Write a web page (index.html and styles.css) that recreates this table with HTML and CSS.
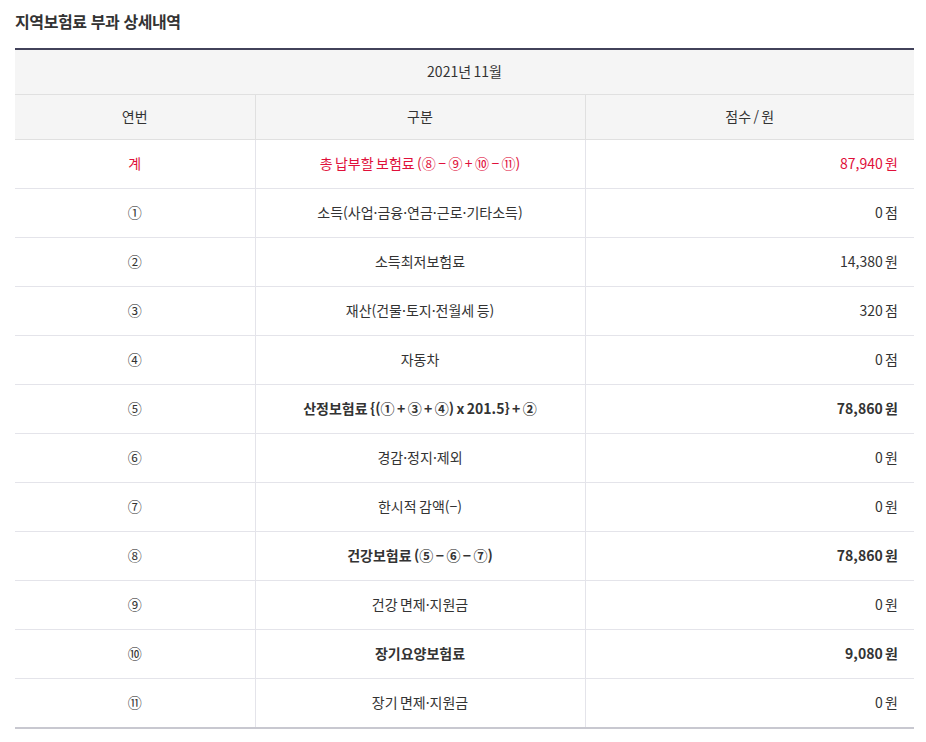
FILE: index.html
```html
<!DOCTYPE html>
<html lang="ko">
<head>
<meta charset="utf-8">
<link rel="stylesheet" href="styles.css">
</head>
<body>
<div class="wrap">
  <h2 class="title">지역보험료 부과 상세내역</h2>
  <table class="detail">
    <colgroup>
      <col class="c1"><col class="c2"><col class="c3">
    </colgroup>
    <thead>
      <tr class="month"><th colspan="3">2021년 11월</th></tr>
      <tr class="heads"><th>연번</th><th>구분</th><th>점수 / 원</th></tr>
    </thead>
    <tbody>
      <tr class="red"><td>계</td><td>총 납부할 보험료 (⑧ − ⑨ + ⑩ − ⑪)</td><td class="num">87,940 원</td></tr>
      <tr><td>①</td><td>소득(사업·금융·연금·근로·기타소득)</td><td class="num">0 점</td></tr>
      <tr><td>②</td><td>소득최저보험료</td><td class="num">14,380 원</td></tr>
      <tr><td>③</td><td>재산(건물·토지·전월세 등)</td><td class="num">320 점</td></tr>
      <tr><td>④</td><td>자동차</td><td class="num">0 점</td></tr>
      <tr class="bold"><td class="nb">⑤</td><td>산정보험료 {(① + ③ + ④) x 201.5} + ②</td><td class="num">78,860 원</td></tr>
      <tr><td>⑥</td><td>경감·정지·제외</td><td class="num">0 원</td></tr>
      <tr><td>⑦</td><td>한시적 감액(−)</td><td class="num">0 원</td></tr>
      <tr class="bold"><td class="nb">⑧</td><td>건강보험료 (⑤ − ⑥ − ⑦)</td><td class="num">78,860 원</td></tr>
      <tr><td>⑨</td><td>건강 면제·지원금</td><td class="num">0 원</td></tr>
      <tr class="bold"><td class="nb">⑩</td><td>장기요양보험료</td><td class="num">9,080 원</td></tr>
      <tr><td>⑪</td><td>장기 면제·지원금</td><td class="num">0 원</td></tr>
    </tbody>
  </table>
</div>
</body>
</html>
```
FILE: styles.css
```css
html, body {
  margin: 0;
  padding: 0;
  background: #fff;
}
body {
  font-family: "Noto Sans CJK KR", "Noto Sans", sans-serif;
  color: #333;
}
.wrap {
  padding: 10px 12px 0 15px;
}
.title {
  margin: 0 0 15px 0;
  font-size: 16px;
  font-weight: 700;
  line-height: 23px;
  letter-spacing: -0.4px;
  color: #333;
}
.detail {
  width: 899px;
  border-collapse: collapse;
  border-top: 2px solid #42425a;
  border-bottom: 2px solid #c8c8d0;
  font-size: 14px;
  letter-spacing: 0;
  word-spacing: -1.5px;
}
.c1 { width: 240px; }
.c2 { width: 330px; }
.c3 { width: 329px; }
.detail th {
  background: #f5f5f5;
  font-weight: 400;
  color: #333;
}
.month th {
  height: 42px;
  padding: 0 0 2px 0;
  border-bottom: 1px solid #e0e0e0;
}
.heads th {
  height: 42px;
  padding: 0 0 2px 0;
  border-bottom: 1px solid #e0e0e0;
  border-left: 1px solid #e0e0e0;
}
.heads th:first-child { border-left: none; }
.detail td {
  height: 46px;
  padding: 0 0 2px 0;
  text-align: center;
  border-bottom: 1px solid #e4e4ea;
  border-left: 1px solid #e4e4ea;
}
.detail td:first-child { border-left: none; }
.detail td.num {
  text-align: right;
  padding-right: 16px;
}
.red td { color: #e0103a; }
.bold td { font-weight: 700; }
.bold td.nb { font-weight: 400; }
```
